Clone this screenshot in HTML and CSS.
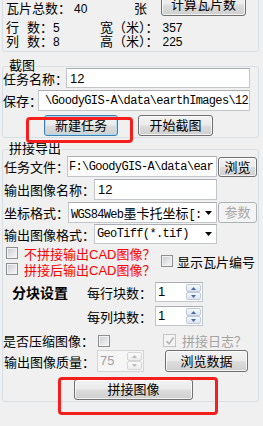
FILE: index.html
```html
<!DOCTYPE html>
<html lang="zh-CN">
<head>
<meta charset="utf-8">
<title>拼接导出</title>
<link rel="stylesheet" href="styles.css">
</head>
<body>
<div class="win">
  <div class="group g1">
    <div class="row1">
      <span class="c1 txt">瓦片总数：<span class="num n40">40</span></span>
      <span class="c2 txt">张</span>
      <button class="btn calc">计算瓦片数</button>
    </div>
    <div class="srow first">
      <span class="c1"><span class="w21">行</span>数：<span class="num">5</span></span>
      <span>宽（米）：<span class="num n357">357</span></span>
    </div>
    <div class="srow">
      <span class="c1"><span class="w21">列</span>数：<span class="num">8</span></span>
      <span>高（米）：<span class="num n357">225</span></span>
    </div>
  </div>

  <div class="group g2">
    <div class="gtitle">截图</div>
    <div class="frow ra">
      <span class="lbl l63">任务名称：</span>
      <div class="tb w184">12</div>
    </div>
    <div class="frow rb">
      <span class="lbl l35">保存：</span>
      <div class="tb path mono w212"><span class="ptxt">\GoodyGIS-A\data\earthImages\12</span></div>
    </div>
    <div class="frow rbtn">
      <button class="btn focus b74">新建任务</button>
      <button class="btn b75">开始截图</button>
    </div>
  </div>

  <div class="group g3">
    <div class="gtitle">拼接导出</div>
    <div class="frow r1">
      <span class="lbl l64">任务文件：</span>
      <div class="tb file mono w150"><span class="ptxt">F:\GoodyGIS-A\data\ear</span></div>
      <button class="btn side">浏览</button>
    </div>
    <div class="frow r2">
      <span class="lbl l91">输出图像名称：</span>
      <div class="tb w123">12</div>
    </div>
    <div class="frow r3">
      <span class="lbl l65">坐标格式：</span>
      <div class="combo w149">
        <span class="ctext mono">WGS84Web<span class="zh">墨卡托坐标</span>[:</span>
        <svg class="dd" width="7" height="4" viewBox="0 0 7 4"><path d="M0 0h7L3.5 4z" fill="#000"/></svg>
      </div>
      <button class="btn side dis">参数</button>
    </div>
    <div class="frow r4">
      <span class="lbl l91">输出图像格式：</span>
      <div class="combo w123">
        <span class="ctext mono">GeoTiff(*.tif)</span>
        <svg class="dd" width="7" height="4" viewBox="0 0 7 4"><path d="M0 0h7L3.5 4z" fill="#000"/></svg>
      </div>
    </div>
    <div class="cbrow">
      <div class="cbcol">
        <label class="cbl red"><span class="cb"></span>不拼接输出CAD图像？</label>
        <label class="cbl red"><span class="cb"></span>拼接后输出CAD图像？</label>
      </div>
      <label class="cbl tilenum"><span class="cb"></span>显示瓦片编号</label>
    </div>
    <div class="blk r6">
      <span class="bold">分块设置</span>
      <span class="lbl l69">每行块数：</span>
      <div class="spin">
        <span class="val">1</span>
        <span class="arrows">
          <span class="ab"><svg width="5" height="3" viewBox="0 0 5 3"><path d="M0 3h5L2.5 0z"/></svg></span>
          <span class="ab"><svg width="5" height="3" viewBox="0 0 5 3"><path d="M0 0h5L2.5 3z"/></svg></span>
        </span>
      </div>
    </div>
    <div class="blk r7">
      <span class="lbl l69">每列块数：</span>
      <div class="spin">
        <span class="val">1</span>
        <span class="arrows">
          <span class="ab"><svg width="5" height="3" viewBox="0 0 5 3"><path d="M0 3h5L2.5 0z"/></svg></span>
          <span class="ab"><svg width="5" height="3" viewBox="0 0 5 3"><path d="M0 0h5L2.5 3z"/></svg></span>
        </span>
      </div>
    </div>
    <div class="frow r8">
      <span class="lbl l95">是否压缩图像：</span>
      <span class="cb"></span>
      <label class="cbl logchk"><span class="cb chk"><svg width="10" height="10" viewBox="0 0 10 10"><path d="M1.5 5.2L4 7.8L8.6 1.6" fill="none" stroke="#b4b4b4" stroke-width="1.6"/></svg></span>拼接日志？</label>
    </div>
    <div class="frow r9">
      <span class="lbl l94">输出图像质量：</span>
      <div class="spin dis">
        <span class="val">75</span>
        <span class="arrows">
          <span class="ab"><svg width="5" height="3" viewBox="0 0 5 3"><path d="M0 3h5L2.5 0z"/></svg></span>
          <span class="ab"><svg width="5" height="3" viewBox="0 0 5 3"><path d="M0 0h5L2.5 3z"/></svg></span>
        </span>
      </div>
      <button class="btn b83">浏览数据</button>
    </div>
    <div class="frow r10">
      <button class="btn b119">拼接图像</button>
    </div>
  </div>

  <div class="mark m1"></div>
  <div class="mark m2"></div>
</div>
</body>
</html>
```

FILE: styles.css
```css
* { box-sizing: border-box; }
html, body { margin: 0; padding: 0; background: #f0f0f0; }
body {
  font-family: "Liberation Sans", "Noto Sans CJK SC", sans-serif;
  font-size: 13px;
  color: #000;
}
.win {
  position: relative;
  display: flow-root;
  width: 263px;
  height: 426px;
  overflow: hidden;
}

/* group boxes */
.group {
  width: 257px;
  margin-left: 2px;
  border: 1px solid #d5dfe5;
  border-radius: 3px;
}
.g1 { margin-top: -9px; padding: 1px 0 2px 3px; }
.g2 { margin-top: 14px; padding: 0 0 1px 0; }
.g3 { margin-top: 11px; padding: 0 0 1px 0; }
.gtitle {
  width: fit-content;
  margin: -8px 0 -5px 5px;
  padding: 0 1px;
  height: 13px;
  line-height: 13px;
  background: #f0f0f0;
  white-space: nowrap;
}

/* top statistics */
.row1 { display: flex; height: 23px; }
.row1 .txt { align-self: flex-end; line-height: 14px; }
.c1 { flex: none; width: 94px; white-space: nowrap; }
.c2 { flex: none; width: 61px; padding-left: 34px; }
.calc { width: 85px; height: 23px; }
.srow { display: flex; height: 14px; line-height: 14px; white-space: nowrap; }
.srow.first { margin-top: 5px; }
.w21 { display: inline-block; width: 21px; }
.num { font-size: 12px; }
.n40 { margin-left: 3px; }
.n357 { margin-left: 4px; }

/* rows */
.frow { display: flex; align-items: center; }
.lbl { flex: none; white-space: nowrap; }
.g3 .lbl { padding-left: 1px; }
.l35 { width: 35px; }
.l63 { width: 63px; }
.l64 { width: 64px; }
.l65 { width: 65px; }
.l69 { width: 69px; }
.l91 { width: 91px; }
.l94 { width: 94px; }
.l95 { width: 95px; }
.g3 .r8 .lbl { padding-left: 0; }

.ra { margin-top: 1px; height: 20px; }
.rb { margin-top: 2px; height: 21px; }
.rbtn { margin-top: 4px; height: 21px; padding-left: 41px; gap: 20px; }

.r1 { margin-top: 6px; height: 21px; }
.r2 { margin-top: 2px; height: 21px; }
.r3 { margin-top: 2px; height: 21px; }
.r4 { margin-top: 1px; height: 20px; }
.r8 { margin-top: 7px; height: 15px; }
.r9 { margin-top: 2px; height: 22px; }
.r10 { margin-top: 7px; height: 21px; padding-left: 71px; }

/* text boxes */
.tb {
  flex: none;
  height: 100%;
  background: #fff;
  border: 1px solid #c2c5cb;
  border-top-color: #abadb3;
  display: flex;
  align-items: center;
  padding: 0 1px 0 3px;
  overflow: hidden;
  white-space: nowrap;
}
.tb.path { padding: 0 1px 0 6px; }
.tb.file { padding: 0 1px; }
.ptxt { flex: none; }
.mono {
  font-family: "Liberation Mono", "Noto Sans CJK SC", monospace;
  font-size: 12px;
  letter-spacing: -0.65px;
}
.zh { font-family: "Noto Sans CJK SC", sans-serif; font-size: 13px; letter-spacing: 0; }
.w123 { width: 123px; }
.w149 { width: 149px; }
.w150 { width: 150px; }
.w184 { width: 184px; }
.w212 { width: 212px; }

/* combo boxes */
.combo {
  flex: none;
  height: 100%;
  background: #fff;
  border: 1px solid #c2c5cb;
  border-top-color: #abadb3;
  display: flex;
  align-items: center;
  padding-left: 2px;
  overflow: hidden;
}
.ctext { flex: 1; min-width: 0; overflow: hidden; white-space: nowrap; }
.dd { flex: none; margin: 0 4px 0 2px; }

/* buttons */
.btn {
  flex: none;
  padding: 0;
  margin: 0;
  font-family: "Liberation Sans", "Noto Sans CJK SC", sans-serif;
  font-size: 13px;
  line-height: 1;
  color: #000;
  border: 1px solid #707070;
  border-radius: 3px;
  background: linear-gradient(#f2f2f2 0%, #ebebeb 49%, #dddddd 51%, #cfcfcf 100%);
  box-shadow: inset 0 0 0 1px rgba(255, 255, 255, 0.75);
  display: flex;
  align-items: center;
  justify-content: center;
  white-space: nowrap;
}
.btn.focus { border-color: #3c7fb1; box-shadow: inset 0 0 0 1px #a9dbf8; }
.btn.dis {
  border-color: #adb2b5;
  background: #f4f4f4;
  color: #a8a8a8;
  box-shadow: none;
}
.b74 { width: 74px; height: 21px; }
.b75 { width: 75px; height: 21px; }
.side { width: 39px; height: 20px; margin-left: 1px; align-self: flex-end; }
.r3 .side { height: 21px; }
.b83 { width: 83px; height: 22px; margin-left: 21px; }
.b119 { width: 119px; height: 21px; }

/* check boxes */
.cbrow { margin-top: 1px; height: 32px; display: flex; align-items: center; }
.cbcol { flex: none; width: 158px; padding-left: 3px; }
.cbl { display: flex; align-items: center; height: 16px; white-space: nowrap; }
.cb {
  flex: none;
  width: 12px;
  height: 12px;
  border: 1px solid #8e8f8f;
  background: linear-gradient(135deg, #c6c9ce 0%, #e4e5e7 55%, #f8f8f8 100%);
  box-shadow: inset 0 0 0 1px #f2f2f2;
  display: flex;
  align-items: center;
  justify-content: center;
}
.cbcol .cb { margin-right: 6px; }
.red { color: #ff0000; }
.tilenum .cb { margin-right: 4px; }
.logchk { margin-left: 53px; color: #a3a3a3; height: 15px; }
.logchk .cb { width: 13px; height: 13px; margin-right: 6px; border-color: #c4c4c4; background: #f4f4f4; box-shadow: none; }

/* block settings */
.blk { display: flex; align-items: center; height: 20px; }
.r6 { margin-top: 5px; }
.r7 { margin-top: 4px; padding-left: 83px; }
.bold {
  flex: none;
  width: 83px;
  padding-left: 9px;
  font-weight: bold;
  font-size: 14px;
  white-space: nowrap;
}

/* spinners */
.spin {
  flex: none;
  width: 48px;
  height: 20px;
  display: flex;
  background: #fff;
  border: 1px solid #c2c5cb;
  border-top-color: #abadb3;
  padding: 1px;
}
.val { flex: 1; padding-left: 1px; line-height: 16px; }
.arrows { flex: none; width: 15px; display: flex; flex-direction: column; }
.ab {
  flex: 1;
  display: flex;
  align-items: center;
  justify-content: center;
  border: 1px solid #bfcbdb;
  border-radius: 2px;
  background: linear-gradient(#f6f9fd, #dbe4f0);
}
.ab svg { fill: #4a6898; }
.spin.dis {
  width: 47px;
  height: 22px;
  background: #f6f6f6;
  border-color: #d4d4d4;
  color: #a0a0a0;
}
.spin.dis .val { line-height: 18px; }
.spin.dis .ab { border-color: #d6d6d6; background: linear-gradient(#fafafa, #ececec); }
.spin.dis .ab svg { fill: #b8b8b8; }

/* red annotation frames */
.mark {
  position: absolute;
  border: 3px solid #f71e1e;
  border-radius: 4px;
  pointer-events: none;
}
.m1 { left: 26px; top: 117px; width: 107px; height: 26px; }
.m2 { left: 58px; top: 377px; width: 160px; height: 38px; }
```
